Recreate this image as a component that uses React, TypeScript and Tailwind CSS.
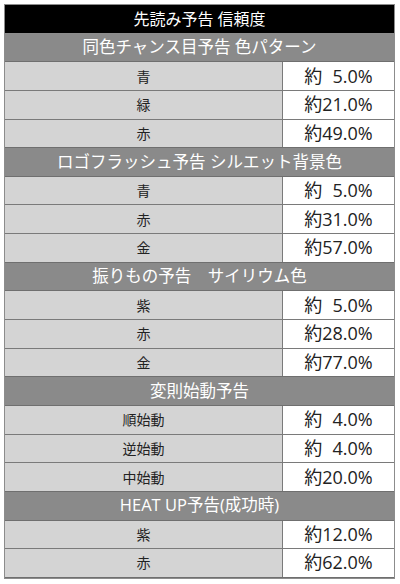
import React from "react";

type Section = { title: string; rows: [string, string][] };

const SECTIONS: Section[] = [
  {
    title: "同色チャンス目予告 色パターン",
    rows: [
      ["青", "約\u20075.0%"],
      ["緑", "約21.0%"],
      ["赤", "約49.0%"],
    ],
  },
  {
    title: "ロゴフラッシュ予告 シルエット背景色",
    rows: [
      ["青", "約\u20075.0%"],
      ["赤", "約31.0%"],
      ["金", "約57.0%"],
    ],
  },
  {
    title: "振りもの予告\u3000サイリウム色",
    rows: [
      ["紫", "約\u20075.0%"],
      ["赤", "約28.0%"],
      ["金", "約77.0%"],
    ],
  },
  {
    title: "変則始動予告",
    rows: [
      ["順始動", "約\u20074.0%"],
      ["逆始動", "約\u20074.0%"],
      ["中始動", "約20.0%"],
    ],
  },
  {
    title: "HEAT UP予告(成功時)",
    rows: [
      ["紫", "約12.0%"],
      ["赤", "約62.0%"],
    ],
  },
];

const FONT = { fontFamily: '"Open Sans", "Noto Sans CJK JP", sans-serif' };

export default function App() {
  return (
    <div className="w-[400px] h-[584px] bg-white pt-[4px] pl-[4px]" style={FONT}>
      <div className="w-[391px] border border-[#8c8c8c] flex flex-col">
        <div className="h-[28.65px] bg-black border-b border-[#8c8c8c] flex items-center justify-center text-white text-[16px]">
          先読み予告 信頼度
        </div>
        {SECTIONS.map((s) => (
          <div key={s.title} className="flex flex-col">
            <div className="h-[28.65px] bg-[#8a8a8a] border-b border-[#6f6f6f] flex items-center justify-center text-white text-[16.5px]">
              {s.title}
            </div>
            {s.rows.map(([label, value], i) => (
              <div key={i} className="h-[28.65px] flex border-b border-[#7a7a7a] last:border-b-[#6f6f6f]">
                <div className="w-[278px] bg-[#d4d4d4] border-r border-[#7a7a7a] flex items-center justify-center text-[14px] text-[#222]">
                  {label}
                </div>
                <div className="flex-1 bg-white flex items-center justify-center text-[18px] text-[#222]">
                  {value}
                </div>
              </div>
            ))}
          </div>
        ))}
      </div>
    </div>
  );
}
